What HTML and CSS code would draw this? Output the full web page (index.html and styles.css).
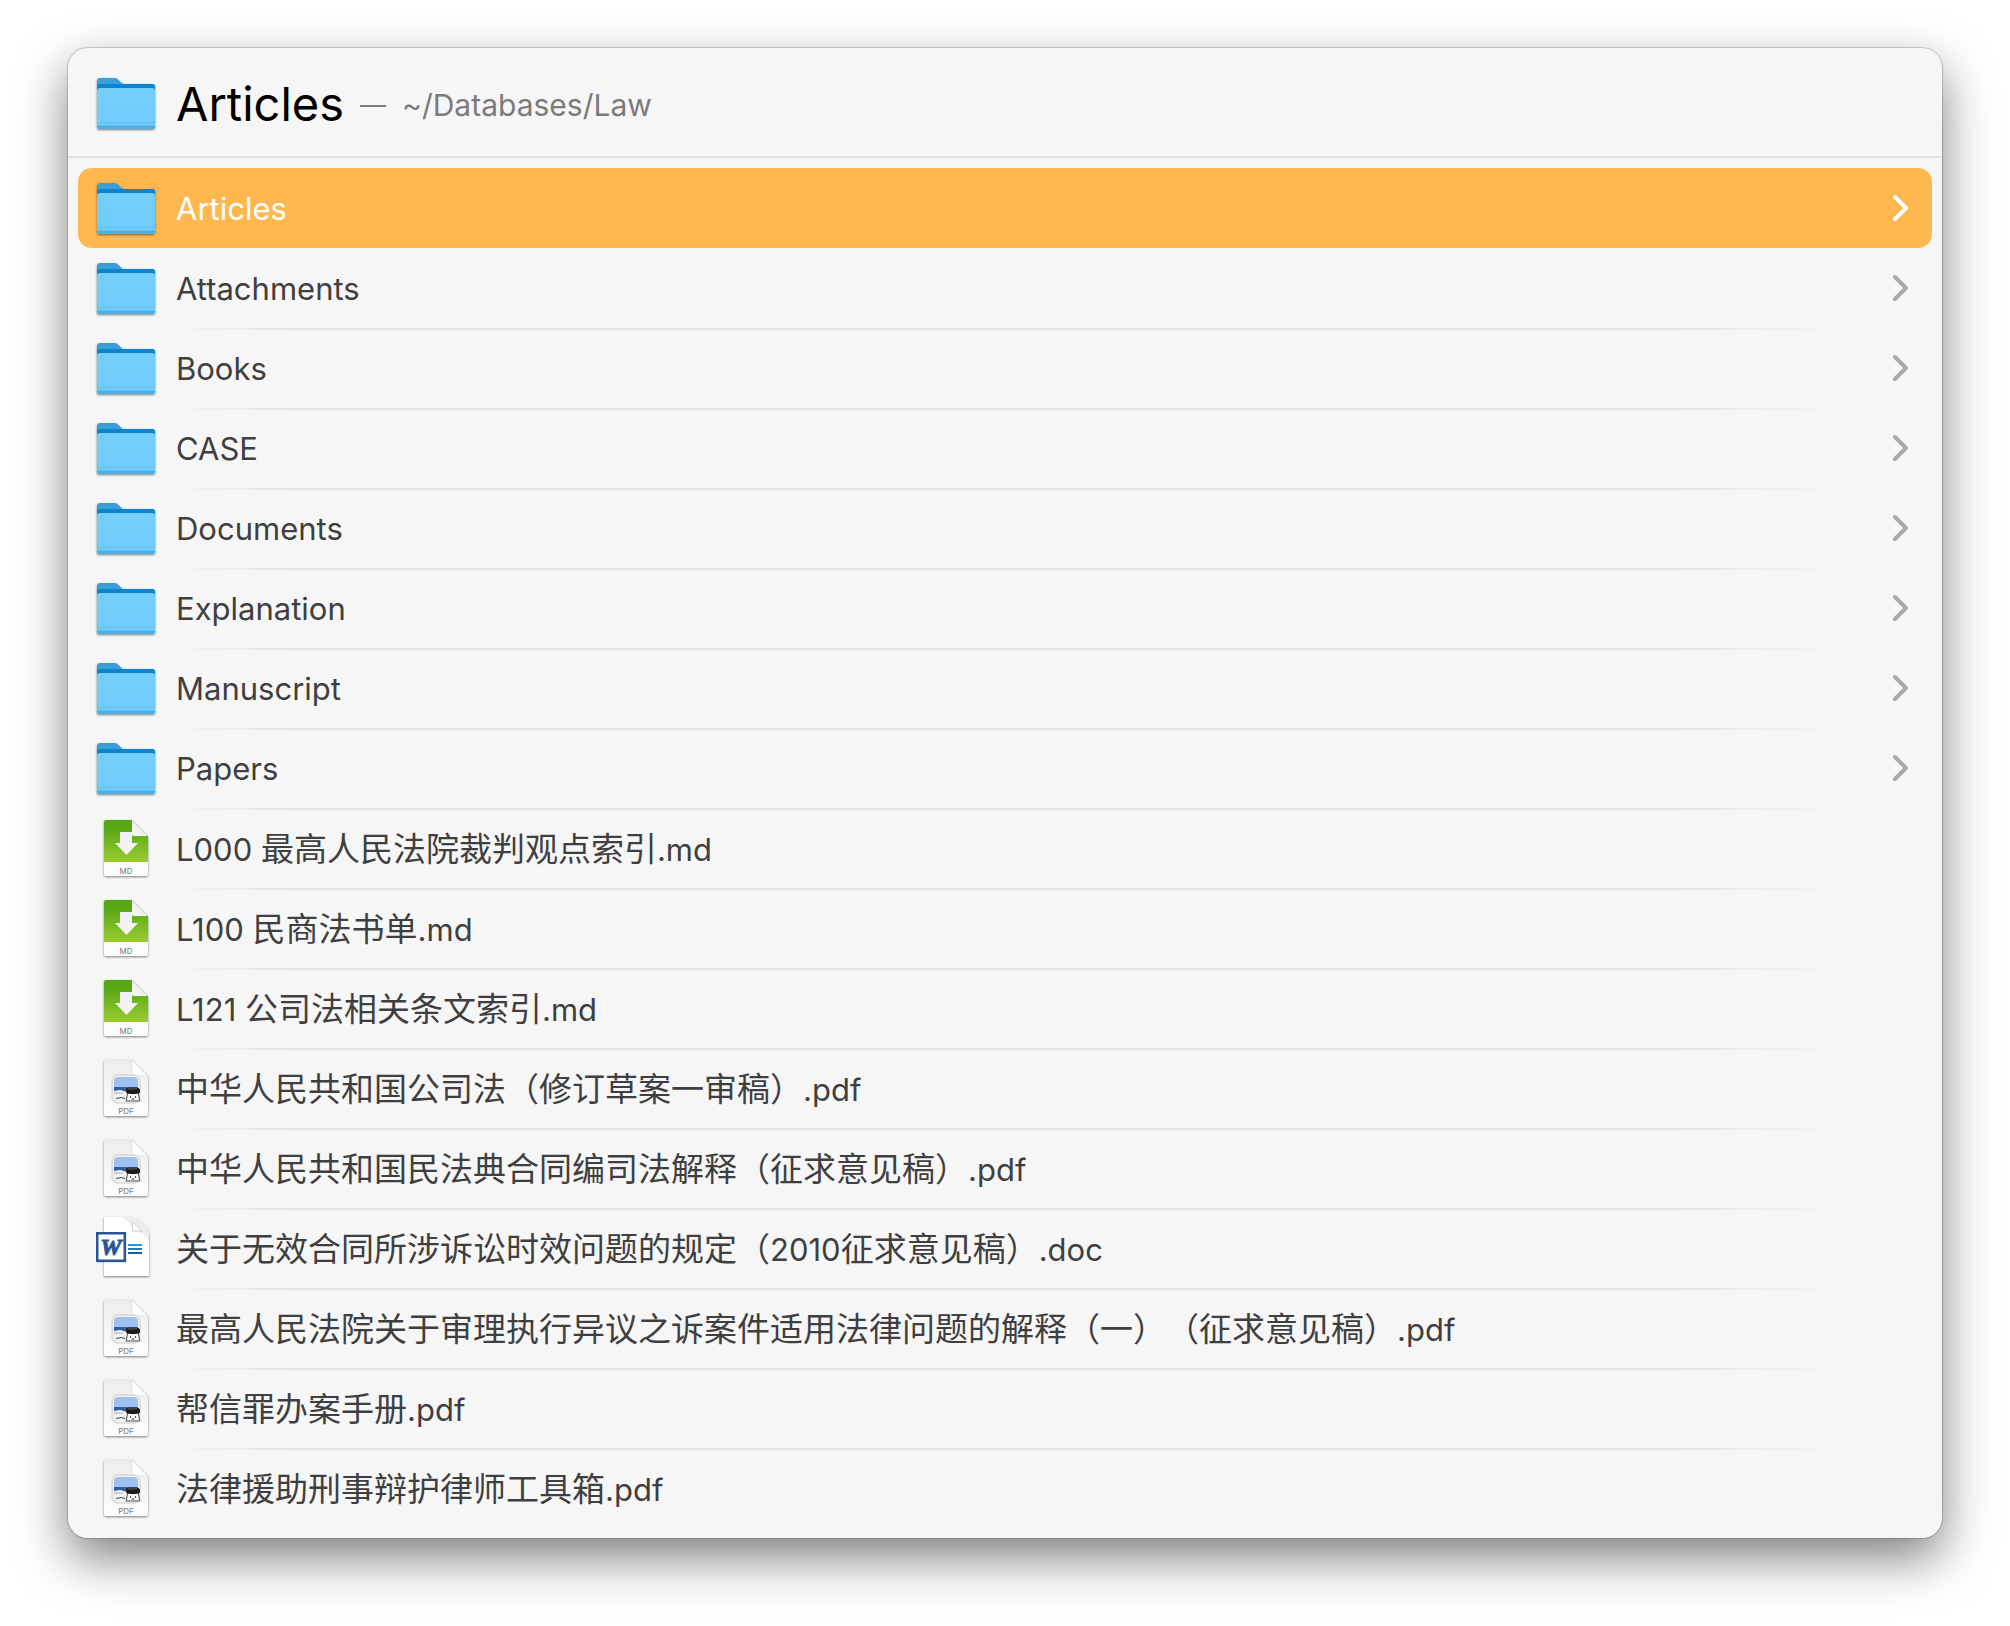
FILE: index.html
```html
<!DOCTYPE html>
<html lang="zh-CN">
<head>
<meta charset="utf-8">
<meta name="viewport" content="width=device-width, initial-scale=1">
<title>Articles</title>
<link rel="stylesheet" href="styles.css">
</head>
<body>
<svg class="sprite" aria-hidden="true">
  <defs>
    <linearGradient id="folder-front" x1="0" y1="0" x2="0" y2="1">
      <stop offset="0" stop-color="#74cffc"/><stop offset="1" stop-color="#6fcbfa"/>
    </linearGradient>
    <linearGradient id="md-green" x1="0" y1="0" x2="0" y2="1">
      <stop offset="0" stop-color="#55a516"/><stop offset=".2" stop-color="#58a817"/><stop offset="1" stop-color="#9bcb2e"/>
    </linearGradient>
    <linearGradient id="page" x1="0" y1="0" x2="0" y2="1">
      <stop offset="0" stop-color="#ececec"/><stop offset="1" stop-color="#fdfdfd"/>
    </linearGradient>
    <linearGradient id="fold" x1="0" y1="1" x2="1" y2="0">
      <stop offset="0" stop-color="#ffffff"/><stop offset=".5" stop-color="#ececec"/><stop offset="1" stop-color="#ffffff"/>
    </linearGradient>
    <filter id="drop" x="-20%" y="-20%" width="140%" height="140%">
      <feDropShadow dx="0" dy="1" stdDeviation="0.8" flood-color="#000" flood-opacity=".5"/>
    </filter>
    <clipPath id="photo"><rect x="20" y="21" width="24" height="24" rx="4"/></clipPath>
  </defs>
  <symbol id="folder" viewBox="0 0 64 64">
    <g filter="url(#drop)">
      <path d="M3 10q0-3 3-3h14c2 0 3 .5 4.500 2l2.500 2.500q1.500 1.500 4 1.500h27q3 0 3 3v39q0 3-3 3H6q-3 0-3-3z" fill="#3a9fd8"/>
      <path d="M3 15q0-2 3-2h52q3 0 3 3v8H3z" fill="#0a84cf"/>
      <path d="M3 20q0-3 3-3h52q3 0 3 3v35q0 3-3 3H6q-3 0-3-3z" fill="url(#folder-front)"/>
      <path d="M3 51.500h58" stroke="#5fbfee"/>
      <path d="M3 54.500h58v.5q0 3-3 3H6q-3 0-3-3z" fill="#4fafe3"/>
    </g>
  </symbol>
  <symbol id="md" viewBox="0 0 64 64">
    <g filter="url(#drop)">
      <path d="M12 4h26l16 16v38q0 2-2 2H12q-2 0-2-2V6q0-2 2-2z" fill="#fcfcfc"/>
    </g>
    <path d="M12 4h26l16 16v26H10V6q0-2 2-2z" fill="url(#md-green)"/>
    <path d="M38 4v14q0 2 2 2h14z" fill="url(#fold)"/>
    <path d="M26 16h12v11h6L32.500 39 21 27h5z" fill="#f2f2f2"/>
  </symbol>
  <symbol id="pdf" viewBox="0 0 64 64">
    <g filter="url(#drop)">
      <path d="M12 4h26l16 16v38q0 2-2 2H12q-2 0-2-2V6q0-2 2-2z" fill="url(#page)"/>
    </g>
    <path d="M38 4v14q0 2 2 2h14z" fill="#fdfdfd" stroke="#d4d4d4" stroke-width=".6"/>
    <rect x="18" y="19" width="28" height="28" rx="6" fill="#f2f2f2" stroke="#c4c4c4" stroke-width=".8"/>
    <g clip-path="url(#photo)">
      <path d="M20 21h24v24H20z" fill="#a0c0ee"/>
      <path d="M20 31h24v5H20z" fill="#2f5f9e"/>
      <path d="M20 35l6-1 5 1.500 13-1.500v12H20z" fill="#f3f3f0"/>
      <path d="M22 42.500l5-1 4 1" stroke="#444" fill="none"/>
      <path d="M20 37h9" stroke="#a9aaa4" fill="none"/>
    </g>
    <path d="M34 36h10l2 9H32z" fill="#f4f4f4" stroke="#444" stroke-width=".9"/>
    <path d="M32 33.500q0-2 7-2t7 2v2.500q0 2-7 2t-7-2z" fill="#191a1e"/>
    <path d="M34 33h9" stroke="#777" stroke-width=".8"/>
    <path d="M36.500 40v2m5-2v2m-4 1h3" stroke="#555" fill="none"/>
  </symbol>
  <symbol id="doc" viewBox="0 0 64 64">
    <g filter="url(#drop)">
      <path d="M10 1h28c8 1 16 9 17 17v42H10z" fill="#fff"/>
    </g>
    <path d="M28 1h10c8 1 16 9 17 17v8c-2-6-7-10-16-11-1-6-4-11-11-14z" fill="#ececec"/>
    <path d="M38.500 6v9h9.500z" fill="#fff" stroke="#c4c4c4" stroke-width=".8"/>
    <path d="M3 17h30v30H3z" opacity=".12"/>
    <path d="M2 16h30v30H2z" fill="#2a5699"/>
    <path d="M4.500 18.500h25v25h-25z" fill="#fff"/>
    <path d="M34 29h14" stroke="#1e9ad6" stroke-width="2"/>
    <path d="M34 33h14" stroke="#0f7fc6" stroke-width="2"/>
    <path d="M34 37h14" stroke="#2a5699" stroke-width="2"/>
  </symbol>
  <symbol id="chevron" viewBox="0 0 16 28">
    <path d="M3 3l11 11L3 25" fill="none" stroke="currentColor" stroke-width="4" stroke-linecap="round" stroke-linejoin="round"/>
  </symbol>
</svg>

<main class="panel">
  <header class="header">
    <svg class="icon" aria-hidden="true"><use href="#folder"/></svg>
    <h1 class="title">Articles</h1>
    <span class="dash">—</span>
    <span class="path">~/Databases/Law</span>
  </header>
  <ul class="list">
    <li><a class="row row--selected" href="#" aria-current="true"><svg class="icon" aria-hidden="true"><use href="#folder"/></svg><span class="name">Articles</span><svg class="chevron" aria-hidden="true"><use href="#chevron"/></svg></a></li>
    <li><a class="row" href="#"><svg class="icon" aria-hidden="true"><use href="#folder"/></svg><span class="name">Attachments</span><svg class="chevron" aria-hidden="true"><use href="#chevron"/></svg></a></li>
    <li><a class="row" href="#"><svg class="icon" aria-hidden="true"><use href="#folder"/></svg><span class="name">Books</span><svg class="chevron" aria-hidden="true"><use href="#chevron"/></svg></a></li>
    <li><a class="row" href="#"><svg class="icon" aria-hidden="true"><use href="#folder"/></svg><span class="name">CASE</span><svg class="chevron" aria-hidden="true"><use href="#chevron"/></svg></a></li>
    <li><a class="row" href="#"><svg class="icon" aria-hidden="true"><use href="#folder"/></svg><span class="name">Documents</span><svg class="chevron" aria-hidden="true"><use href="#chevron"/></svg></a></li>
    <li><a class="row" href="#"><svg class="icon" aria-hidden="true"><use href="#folder"/></svg><span class="name">Explanation</span><svg class="chevron" aria-hidden="true"><use href="#chevron"/></svg></a></li>
    <li><a class="row" href="#"><svg class="icon" aria-hidden="true"><use href="#folder"/></svg><span class="name">Manuscript</span><svg class="chevron" aria-hidden="true"><use href="#chevron"/></svg></a></li>
    <li><a class="row" href="#"><svg class="icon" aria-hidden="true"><use href="#folder"/></svg><span class="name">Papers</span><svg class="chevron" aria-hidden="true"><use href="#chevron"/></svg></a></li>
    <li><a class="row" href="#"><svg class="icon" aria-hidden="true"><use href="#md"/><text x="32" y="58" class="tag">MD</text></svg><span class="name">L000 <span class="han">最高人民法院裁判观点索引</span>.md</span></a></li>
    <li><a class="row" href="#"><svg class="icon" aria-hidden="true"><use href="#md"/><text x="32" y="58" class="tag">MD</text></svg><span class="name">L100 <span class="han">民商法书单</span>.md</span></a></li>
    <li><a class="row" href="#"><svg class="icon" aria-hidden="true"><use href="#md"/><text x="32" y="58" class="tag">MD</text></svg><span class="name">L121 <span class="han">公司法相关条文索引</span>.md</span></a></li>
    <li><a class="row" href="#"><svg class="icon" aria-hidden="true"><use href="#pdf"/><text x="32" y="58" class="tag">PDF</text></svg><span class="name"><span class="han">中华人民共和国公司法（修订草案一审稿）</span>.pdf</span></a></li>
    <li><a class="row" href="#"><svg class="icon" aria-hidden="true"><use href="#pdf"/><text x="32" y="58" class="tag">PDF</text></svg><span class="name"><span class="han">中华人民共和国民法典合同编司法解释（征求意见稿）</span>.pdf</span></a></li>
    <li><a class="row" href="#"><svg class="icon" aria-hidden="true"><use href="#doc"/><text x="17" y="39" class="word">W</text></svg><span class="name"><span class="han">关于无效合同所涉诉讼时效问题的规定（</span>2010<span class="han">征求意见稿）</span>.doc</span></a></li>
    <li><a class="row" href="#"><svg class="icon" aria-hidden="true"><use href="#pdf"/><text x="32" y="58" class="tag">PDF</text></svg><span class="name"><span class="han">最高人民法院关于审理执行异议之诉案件适用法律问题的解释（一）（征求意见稿）</span>.pdf</span></a></li>
    <li><a class="row" href="#"><svg class="icon" aria-hidden="true"><use href="#pdf"/><text x="32" y="58" class="tag">PDF</text></svg><span class="name"><span class="han">帮信罪办案手册</span>.pdf</span></a></li>
    <li><a class="row" href="#"><svg class="icon" aria-hidden="true"><use href="#pdf"/><text x="32" y="58" class="tag">PDF</text></svg><span class="name"><span class="han">法律援助刑事辩护律师工具箱</span>.pdf</span></a></li>
  </ul>
</main>
</body>
</html>
```
FILE: styles.css
```css
* {
  box-sizing: border-box;
}

body {
  margin: 0;
  padding: 48px 68px 88px;
  background: #fff;
  color: #3f3f3f;
  font-family: Inter, "Noto Sans CJK SC", sans-serif;
  font-size: 31px;
  line-height: 40px;
}

.sprite {
  position: absolute;
  width: 0;
  height: 0;
}

.panel {
  background: #f6f6f6;
  border-radius: 20px;
  box-shadow: 0 0 1px 1px rgba(0, 0, 0, .18), 0 20px 50px rgba(0, 0, 0, .5);
}

.header {
  display: flex;
  align-items: center;
  height: 110px;
  padding: 2px 26px 0;
  border-bottom: 2px solid #e2e2e2;
}

.icon {
  flex: none;
  width: 64px;
  height: 64px;
}

.title {
  margin: 0 0 0 18px;
  padding-top: 2px;
  color: #000;
  font-size: 47px;
  font-weight: 400;
  line-height: 60px;
}

.dash,
.path {
  margin-left: 16px;
  padding-top: 4px;
  color: #7b7b7b;
  font-size: 30px;
}

.dash {
  font-size: 26px;
}

.list {
  margin: 0;
  padding: 10px;
  list-style: none;
}

.row {
  display: flex;
  align-items: center;
  height: 80px;
  padding: 0 24px 0 16px;
  background: linear-gradient(to right, transparent, #e2e2e2 7%, #e2e2e2 90%, transparent) no-repeat 96px 0 / calc(100% - 192px) 2px;
  color: inherit;
  text-decoration: none;
}

.row--selected {
  background: #ffb84f;
  border-radius: 14px;
  color: #fff;
}

.list li:nth-child(2) .row {
  background: none;
}

.name {
  flex: 1;
  margin-left: 18px;
  padding-top: 2px;
  white-space: nowrap;
}

.han {
  font-size: 33px;
  text-spacing-trim: space-all;
}

.chevron {
  flex: none;
  width: 16px;
  height: 28px;
  color: #a9a9a9;
}

.row--selected .chevron {
  color: #fff;
}

.tag {
  fill: #777;
  font-family: Inter, sans-serif;
  font-size: 8px;
  text-anchor: middle;
}

.word {
  fill: #2a5699;
  stroke: #2a5699;
  font-family: "Liberation Serif", serif;
  font-size: 24px;
  font-style: italic;
  font-weight: 700;
  text-anchor: middle;
}
```
